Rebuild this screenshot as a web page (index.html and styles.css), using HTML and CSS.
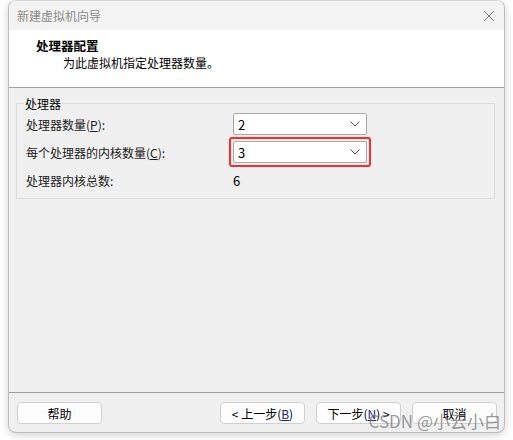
FILE: index.html
```html
<!DOCTYPE html>
<html lang="zh">
<head>
<meta charset="utf-8">
<link rel="stylesheet" href="styles.css">
</head>
<body>
<div class="window">
  <div class="titlebar">
    <span class="title">新建虚拟机向导</span>
    <svg class="close" width="12" height="12" viewBox="0 0 12 12"><path d="M1 1L11 11M11 1L1 11" stroke="#7a7a7a" stroke-width="1" fill="none"/></svg>
  </div>
  <div class="header">
    <div class="h-title">处理器配置</div>
    <div class="h-sub">为此虚拟机指定处理器数量。</div>
  </div>
  <div class="body">
    <fieldset class="group">
      <legend>处理器</legend>
      <div class="row">
        <span class="label">处理器数量(<u>P</u>):</span>
        <div class="select"><span>2</span><svg width="10" height="6" viewBox="0 0 10 6"><path d="M0.5 0.5L5 5L9.5 0.5" stroke="#555" fill="none"/></svg></div>
      </div>
      <div class="row">
        <span class="label">每个处理器的内核数量(<u>C</u>):</span>
        <div class="hl"><div class="select"><span>3</span><svg width="10" height="6" viewBox="0 0 10 6"><path d="M0.5 0.5L5 5L9.5 0.5" stroke="#555" fill="none"/></svg></div></div>
      </div>
      <div class="row total">
        <span class="label">处理器内核总数:</span>
        <span class="value">6</span>
      </div>
    </fieldset>
  </div>
  <div class="footer">
    <button class="btn">帮助</button>
    <div class="spacer"></div>
    <button class="btn">&lt; 上一步(<u>B</u>)</button>
    <button class="btn">下一步(<u>N</u>) &gt;</button>
    <button class="btn">取消</button>
    <span class="watermark">CSDN @小云小白</span>
  </div>
</div>
</body>
</html>
```
FILE: styles.css
```css
* { box-sizing: border-box; }
html, body { margin: 0; padding: 0; background: #ffffff; }
body {
  font-family: "Noto Sans CJK SC", "Microsoft YaHei", sans-serif;
  font-size: 12px;
  color: #000;
  width: 513px;
  height: 440px;
  overflow: hidden;
}
.window {
  margin-left: 8px;
  width: 497px;
  height: 433px;
  border: 1px solid #bdbdbd;
  border-top-color: #d6d6d6;
  border-radius: 8px;
  background: #f0f0f0;
  box-shadow: 0 2px 8px rgba(0,0,0,0.18);
  display: flex;
  flex-direction: column;
  overflow: hidden;
  position: relative;
}
.titlebar {
  height: 29px;
  background: #f3f3f3;
  display: flex;
  align-items: center;
  justify-content: space-between;
  padding: 0 9px 0 8px;
}
.title { color: #8a8a8a; font-size: 12px; line-height: 14px; }
.close { display: block; }
.header {
  height: 58px;
  background: #ffffff;
  border-bottom: 1px solid #a0a0a0;
  padding: 7px 0 0 27px;
}
.h-title { font-weight: bold; font-size: 12.5px; line-height: 17px; }
.h-sub { padding-left: 27px; line-height: 17px; margin-top: 0px; }
.body {
  flex: 1;
  padding: 8px 9px 0 7px;
}
.group {
  margin: 0;
  border: 1px solid #dcdcdc;
  padding: 0 9px 8px 9px;
  height: 103px;
  min-width: 0;
}
.group legend {
  padding: 0 1px;
  margin-left: -2px;
  line-height: 15px;
  margin-bottom: -1px;
}
.row {
  display: flex;
  align-items: center;
  height: 28px;
}
.label { width: 207px; color: #1a1a1a; }
.label u { text-decoration: underline; }
.select {
  width: 134px;
  height: 22px;
  background: #fff;
  border: 1px solid #a8a8a8;
  border-radius: 2px;
  display: flex;
  align-items: center;
  justify-content: space-between;
  padding: 0 6px 0 4px;
  font-size: 13px;
}
.hl {
  margin-left: -4px;
  padding: 2px;
  border: 2px solid #ff2a2a;
  border-radius: 3px;
}
.row.total { height: 28px; }
.value { font-size: 13px; }
.footer {
  height: 40px;
  border-top: 1px solid #a0a0a0;
  display: flex;
  align-items: flex-start;
  padding: 9px 7px 0 8px;
  gap: 11px;
  position: relative;
}
.spacer { flex: 1; }
.btn {
  font-family: inherit;
  font-size: 12px;
  width: 85px;
  height: 22px;
  background: #fdfdfd;
  border: 1px solid #d0d0d0;
  border-radius: 4px;
  padding: 0;
  color: #000;
}
.btn u { color: #1a1a8a; }
.watermark {
  position: absolute;
  right: 3px;
  bottom: -1px;
  font-size: 17px;
  color: rgba(120,120,120,0.75);
  font-family: "Noto Sans CJK SC", sans-serif;
  pointer-events: none;
}
```
